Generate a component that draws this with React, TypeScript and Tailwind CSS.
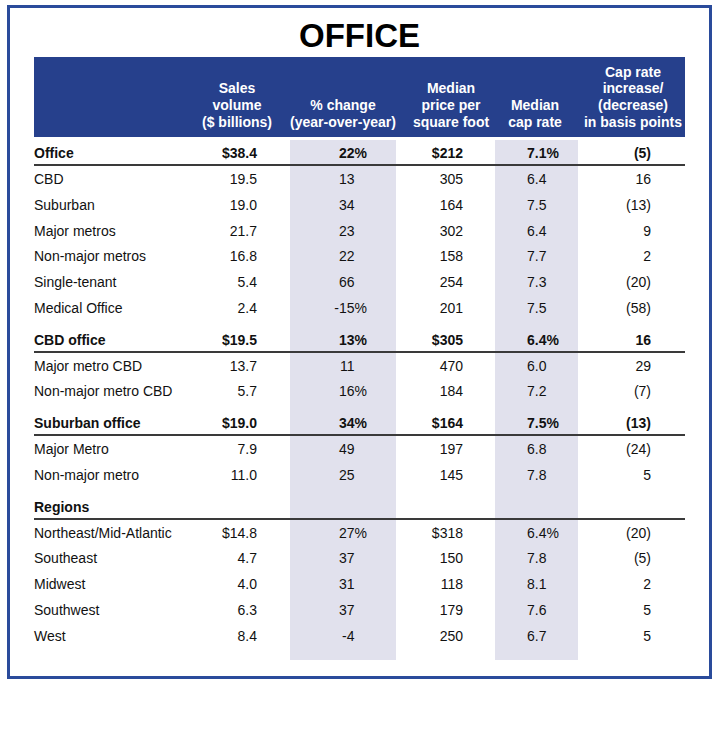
import React from "react";

type R = [string, string, string, string, string, string];

const sections: { head: R; pt: boolean; rows: R[] }[] = [
  {
    head: ["Office", "$38.4", "22%", "$212", "7.1%", "(5)"],
    pt: false,
    rows: [
      ["CBD", "19.5", "13", "305", "6.4", "16"],
      ["Suburban", "19.0", "34", "164", "7.5", "(13)"],
      ["Major metros", "21.7", "23", "302", "6.4", "9"],
      ["Non-major metros", "16.8", "22", "158", "7.7", "2"],
      ["Single-tenant", "5.4", "66", "254", "7.3", "(20)"],
      ["Medical Office", "2.4", "-15%", "201", "7.5", "(58)"],
    ],
  },
  {
    head: ["CBD office", "$19.5", "13%", "$305", "6.4%", "16"],
    pt: true,
    rows: [
      ["Major metro CBD", "13.7", "11", "470", "6.0", "29"],
      ["Non-major metro CBD", "5.7", "16%", "184", "7.2", "(7)"],
    ],
  },
  {
    head: ["Suburban office", "$19.0", "34%", "$164", "7.5%", "(13)"],
    pt: true,
    rows: [
      ["Major Metro", "7.9", "49", "197", "6.8", "(24)"],
      ["Non-major metro", "11.0", "25", "145", "7.8", "5"],
    ],
  },
  {
    head: ["Regions", "", "", "", "", ""],
    pt: true,
    rows: [
      ["Northeast/Mid-Atlantic", "$14.8", "27%", "$318", "6.4%", "(20)"],
      ["Southeast", "4.7", "37", "150", "7.8", "(5)"],
      ["Midwest", "4.0", "31", "118", "8.1", "2"],
      ["Southwest", "6.3", "37", "179", "7.6", "5"],
      ["West", "8.4", "-4", "250", "6.7", "5"],
    ],
  },
];

const GRID = "grid grid-cols-[168px_88px_106px_99px_83px_107px]";
const SHADE = "bg-[#e1e1ed]";

function Pct({ v }: { v: string }) {
  if (v === "") return null;
  if (v.endsWith("%")) return <span>{v}</span>;
  return (
    <span>
      {v}
      <span className="invisible">%</span>
    </span>
  );
}

function Row({ r, bold, kind }: { r: R; bold: boolean; kind: "first" | "sec" | "sub" }) {
  const h =
    kind === "first"
      ? "h-[24px] pt-[2px] leading-[22px]"
      : kind === "sec"
      ? "h-[30px] pt-[8px] leading-[22px]"
      : "h-[25.75px] pt-[2px] leading-[23.75px]";
  const w = bold ? "font-bold" : "font-normal";
  return (
    <div className={`${GRID} ${w} text-[14px] text-[#111111]`}>
      <div className={`${h} whitespace-nowrap`}>{r[0]}</div>
      <div className={`${h} text-right pr-[33px]`}>{r[1]}</div>
      <div className={`${h} ${SHADE} text-right pr-[29px]`}>
        <Pct v={r[2]} />
      </div>
      <div className={`${h} text-right pr-[32px]`}>{r[3]}</div>
      <div className={`${h} ${SHADE} text-right pr-[19px]`}>
        <Pct v={r[4]} />
      </div>
      <div className={`${h} text-right pr-[34px]`}>{r[5]}</div>
    </div>
  );
}

export default function App() {
  return (
    <div
      className="w-[719px] h-[739px] bg-white relative"
      style={{ fontFamily: '"Liberation Sans", Arial, Helvetica, sans-serif' }}
    >
      <div className="pt-[5px] pl-[7px]">
        <div className="w-[705px] h-[674px] border-[3px] border-[#2a4b9b] px-[24px] pt-[11px]">
          <div className="text-center text-[33px] leading-[33px] font-bold text-black">
            OFFICE
          </div>
          <div
            className={`${GRID} mt-[5px] h-[80px] bg-[#26408c] text-white font-bold text-[14px] leading-[16.7px] whitespace-nowrap`}
          >
            <div />
            <div className="flex flex-col justify-end items-center text-center pr-[18px] pb-[6.5px]">
              <div>Sales</div>
              <div>volume</div>
              <div>($ billions)</div>
            </div>
            <div className="flex flex-col justify-end items-center text-center pb-[6.5px]">
              <div>% change</div>
              <div>(year-over-year)</div>
            </div>
            <div className="flex flex-col justify-end items-center text-center pl-[11px] pb-[6.5px]">
              <div>Median</div>
              <div>price per</div>
              <div>square foot</div>
            </div>
            <div className="flex flex-col justify-end items-center text-center pr-[3px] pb-[6.5px]">
              <div>Median</div>
              <div>cap rate</div>
            </div>
            <div className="flex flex-col justify-end items-center text-center pl-[3px] pb-[6.5px]">
              <div>Cap rate</div>
              <div>increase/</div>
              <div>(decrease)</div>
              <div>in basis points</div>
            </div>
          </div>
          <div className="mt-[3px]">
            {sections.map((s, i) => (
              <div key={i}>
                <Row r={s.head} bold={true} kind={s.pt ? "sec" : "first"} />
                <div className="h-[2px] bg-[#3a3a3a]" />
                {s.rows.map((r, j) => (
                  <Row key={j} r={r} bold={false} kind="sub" />
                ))}
              </div>
            ))}
            <div className={`${GRID} h-[12px]`}>
              <div />
              <div />
              <div className={SHADE} />
              <div />
              <div className={SHADE} />
              <div />
            </div>
          </div>
        </div>
      </div>
    </div>
  );
}
